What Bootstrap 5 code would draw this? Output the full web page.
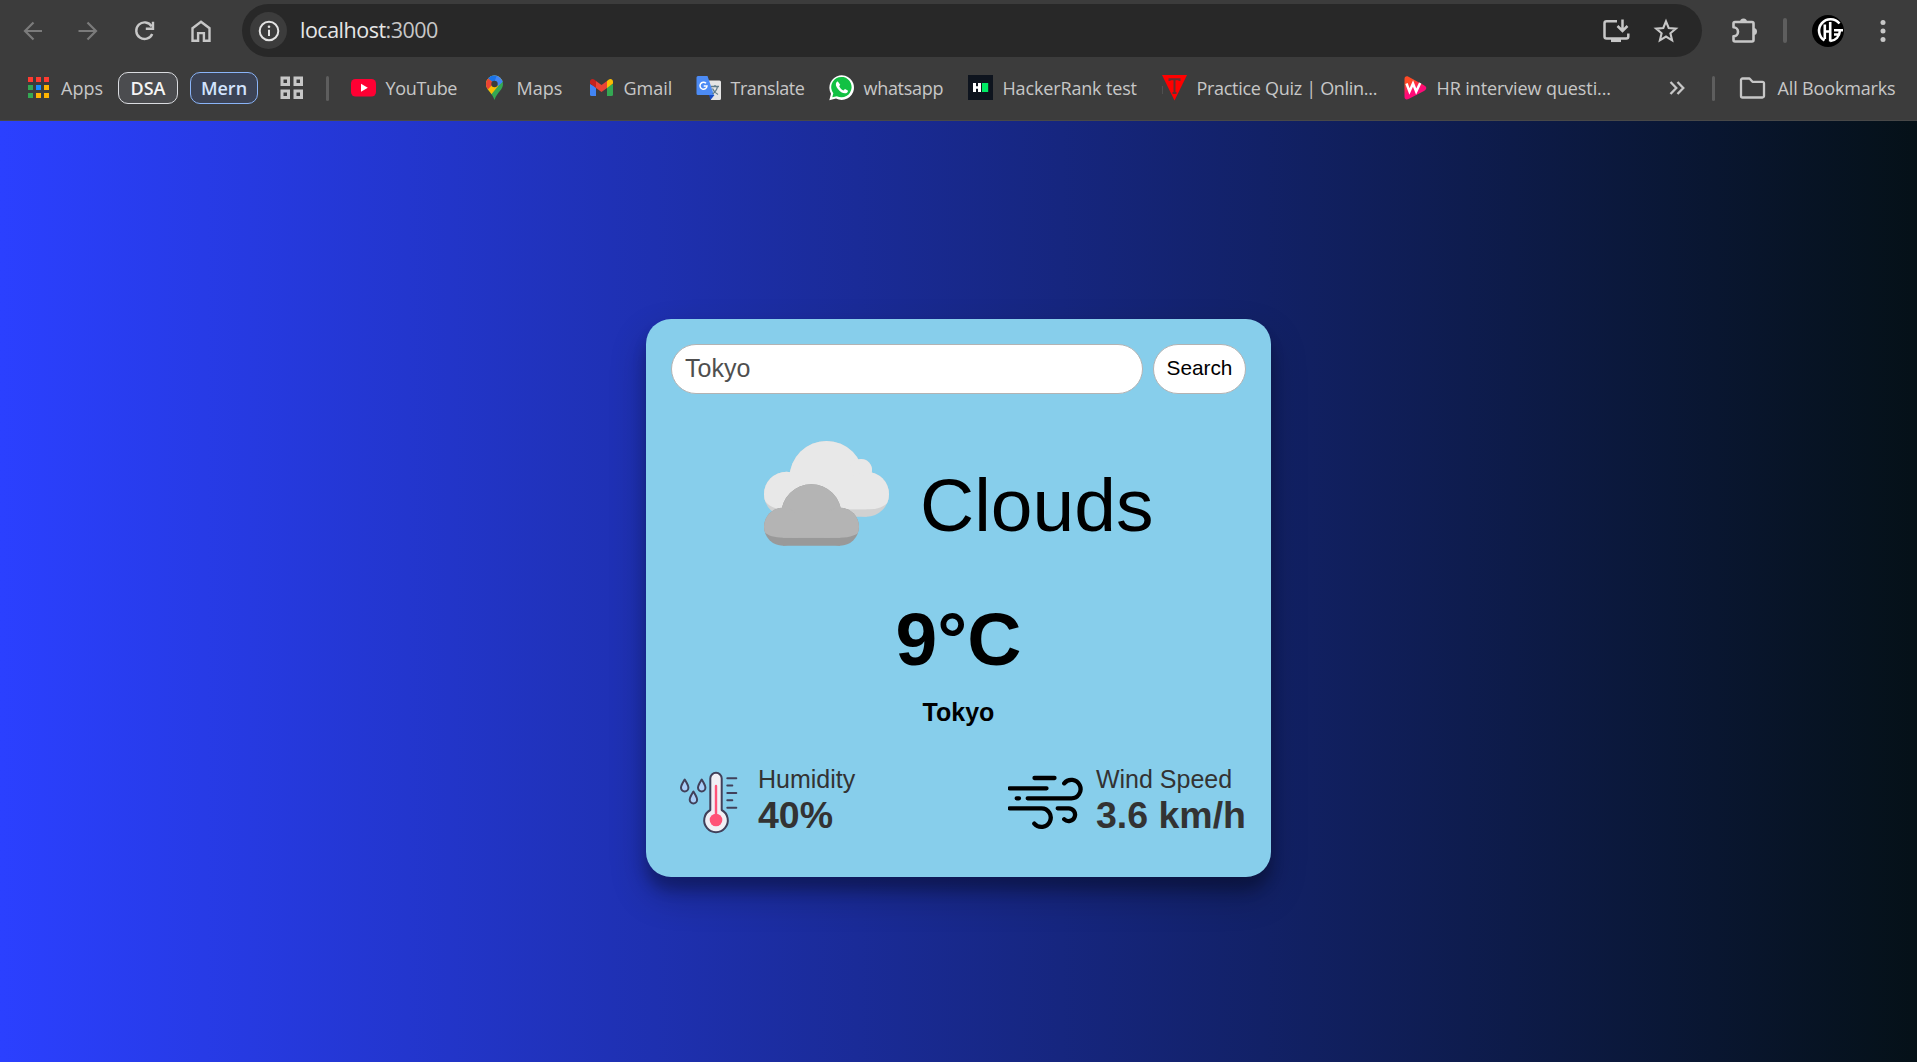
<!DOCTYPE html>
<html lang="en">
<head>
<meta charset="utf-8">
<meta name="viewport" content="width=device-width, initial-scale=1">
<title>Weather</title>
<link href="https://cdn.jsdelivr.net/npm/bootstrap@5.3.0/dist/css/bootstrap.min.css" rel="stylesheet">
<style>
body{height:100vh;overflow:hidden;font-family:"Liberation Sans",Arial,sans-serif;color:#000;background:#3c3c3c}
svg{display:block;flex:none}
/* browser chrome */
.chrome{height:121px;background:#3c3c3c;border-bottom:1px solid #484848;font-family:"Open Sans","Noto Sans",sans-serif;color:#c7c7c7}
.toolbar{height:61px}
.nav-icons{width:242px;padding-left:20px;gap:30px;flex:none}
.omnibox{width:1460px;height:53px;margin-top:4px;border-radius:27px;background:#282828;padding:0 22px 0 8px;flex:none}
.site-info{width:37px;height:37px;background:#3c3c3c}
.address{font-size:21.5px;line-height:30px;margin-left:13px;color:#e6e6e6;letter-spacing:-.5px;margin-top:-1px}
.address span{color:#c7c7c7}
.omni-actions{gap:22px}
.tool-end{padding-left:27px;height:61px}
.divider{width:3.5px;height:25px;border-radius:2px;background:#5e5e5e;flex:none}
.avatar{margin-left:25px}
.dots{margin-left:36px}
.bookmarks{height:54px;padding-left:26px;font-size:18px;line-height:26px}
.bookmarks .txt{white-space:nowrap;margin-top:-1px}
.pill{height:32px;border:1.5px solid #dadce0;border-radius:10px;background:#4b4c4f;color:#f5f5f5;font-weight:600;flex:none}
.pill-dsa{width:60px;margin-left:15px}
.pill-mern{width:68px;margin-left:12px}
.pill-mern{border-color:#8ab4f8;background:#3c4355;color:#d3e3fd}
.apps-icon{margin-right:9px}
.groups-icon{margin-left:21px;margin-right:20.5px}
.links{margin-left:21.5px}
.bm{flex:none}
.bm .ico{width:26px;margin-right:9px}
.w-yt{width:131px;letter-spacing:-.35px}
.w-maps{width:107px}
.w-gmail{width:107px}
.w-tr{width:133px;letter-spacing:-.45px}
.w-wa{width:139px;letter-spacing:-.3px}
.w-hack{width:194px;letter-spacing:-.15px}
.w-quiz{width:240px;letter-spacing:-.3px}
.w-hr{width:265px;letter-spacing:-.1px}
.after-more{margin-left:25px;margin-right:23.5px}
.all-bm{letter-spacing:-.15px;margin-left:11px}
/* page */
.page{height:941px;background:linear-gradient(to right,#2b40ff,#051118)}
.weather{width:625px;height:558px;margin-top:197.5px;padding:25px;border-radius:25px;background:#87ceeb;box-shadow:0 17.5px 35px rgba(0,0,0,.25),0 12.5px 12.5px rgba(0,0,0,.22)}
.city-input{width:471.5px;height:50px;border:1px solid #b3b3b3;border-radius:25px;padding:0 13px;font-size:25px;color:#4f4f4f;background:#fff}
.search-btn,.search-btn:hover{width:93px;height:50px;border:1px solid #b3b3b3;border-radius:25px;font-size:20.8px;line-height:1;color:#000;background:#fff;padding:0}
.sky{margin-top:47px;gap:31.5px}
.sky-name{font-size:75px;line-height:75px;margin-top:27.5px;height:77.5px}
.degrees{font-size:75px;line-height:75px;font-weight:700;margin-top:56.5px}
.place{font-size:25px;line-height:25px;font-weight:700;margin-top:22.5px}
.facts{margin-top:39px;color:#333}
.fact-label{font-size:25px;line-height:31px}
.fact-value{font-size:37.5px;line-height:40px;font-weight:700}
.gap-h{gap:12px}.gap-w{gap:12.5px}
</style>
<script src="https://cdn.jsdelivr.net/npm/bootstrap@5.3.0/dist/js/bootstrap.bundle.min.js"></script>
</head>
<body>
<header class="chrome">
  <div class="toolbar d-flex">
    <div class="nav-icons d-flex align-items-center">
      <svg width="26" height="26" viewBox="0 0 26 26" fill="none" stroke="#7b7b7b" stroke-width="2.200"><path d="M22 13H5M13.500 4.500 5 13l8.500 8.500"/></svg>
      <svg width="26" height="26" viewBox="0 0 26 26" fill="none" stroke="#7b7b7b" stroke-width="2.200"><path d="M2.500 13h17M11.500 4.500 20 13l-8.500 8.500"/></svg>
      <svg width="26" height="26" viewBox="0 0 26 26" fill="none" stroke="#c7c7c7" stroke-width="2.400"><path d="M19.600 8.300A8.300 8.300 0 1 0 20.200 16M21 3.800v7h-7.200"/></svg>
      <svg width="26" height="26" viewBox="0 0 26 26" fill="none" stroke="#c7c7c7" stroke-width="2.400"><path d="M4.500 10.200 13 3.800l8.500 6.400v12.500h-5.600v-7.600h-5.800v7.600H4.500z"/></svg>
    </div>
    <div class="omnibox d-flex align-items-center">
      <span class="site-info rounded-circle d-flex align-items-center justify-content-center">
        <svg width="22" height="22" viewBox="0 0 22 22"><circle cx="11" cy="11" r="9.300" fill="none" stroke="#e3e3e3" stroke-width="2"/><circle cx="11" cy="6.800" r="1.300" fill="#e3e3e3"/><path d="M11 9.700v6.200" stroke="#e3e3e3" stroke-width="2"/></svg>
      </span>
      <span class="address">localhost<span>:3000</span></span>
      <div class="omni-actions d-flex align-items-center ms-auto">
        <svg width="30" height="28" viewBox="0 0 30 28" fill="none" stroke="#c7c7c7" stroke-width="2.500"><path d="M17 4.200H6.500a2 2 0 0 0-2 2v13.300a2 2 0 0 0 2 2h19.800a2 2 0 0 0 2-2V16.500"/><path d="M22.500 2.500v11M17.500 9l5 5 5-5"/><path d="M11 23.300h10" stroke-width="3.500"/></svg>
        <svg width="28" height="28" viewBox="0 0 28 28" fill="none" stroke="#c7c7c7" stroke-width="2.100"><path d="M14 4.300l2.700 6.700 7.200.6-5.500 4.700 1.700 7L14 19.500l-6.100 3.800 1.700-7L4.100 11.600l7.200-.6z"/></svg>
      </div>
    </div>
    <div class="tool-end d-flex align-items-center flex-grow-1">
      <svg width="30" height="30" viewBox="0 0 30 30"><path d="M6 6h17a1.500 1.500 0 0 1 1.500 1.500v16.500a1.500 1.500 0 0 1-1.500 1.500H6A1.500 1.500 0 0 1 4.500 24v-3.700a4.400 4.400 0 0 0 0-9V7.500A1.500 1.500 0 0 1 6 6z" fill="none" stroke="#c7c7c7" stroke-width="2.600" stroke-linejoin="round"/><path d="M11 6a3.500 3.500 0 0 1 7 0zM24.500 12a3.500 3.500 0 0 1 0 7z" fill="#c7c7c7"/></svg>
      <span class="divider ms-4"></span>
      <svg class="avatar" width="32" height="32" viewBox="0 0 32 32" fill="none" stroke="#fff" stroke-width="2.600"><circle cx="16" cy="16" r="16" fill="#000" stroke="none"/><path d="M27.500 8.500A11.500 11.500 0 1 0 12.500 25.500"/><path d="M12.800 9.500v14.500M18.200 7v19.500M12.800 16.500h5.400M31 15.300h-9M28 15.500c-.5 6-4.500 10-9.800 10.500M22 19.500h6"/></svg>
      <svg class="dots" width="6" height="24" viewBox="0 0 6 24" fill="#c7c7c7"><circle cx="3" cy="3.500" r="2.500"/><circle cx="3" cy="12" r="2.500"/><circle cx="3" cy="20.500" r="2.500"/></svg>
    </div>
  </div>
  <nav class="bookmarks d-flex align-items-center">
    <svg class="apps-icon" width="26" height="24" viewBox="0 0 26 24"><g transform="translate(2 0)"><path d="M0 1h5v5H0zM8 1h5v5H8zM16 1h5v5h-5z" fill="#ff3b30"/><path d="M0 9h5v5H0zM0 17h5v5H0z" fill="#34a853"/><path d="M8 9h5v5H8z" fill="#1a8cff"/><path d="M16 9h5v5h-5zM8 17h5v5H8zM16 17h5v5h-5z" fill="#ffb300"/></g></svg>
    <span class="txt">Apps</span>
    <span class="pill pill-dsa d-flex align-items-center justify-content-center"><span class="txt">DSA</span></span>
    <span class="pill pill-mern d-flex align-items-center justify-content-center"><span class="txt">Mern</span></span>
    <svg class="groups-icon" width="26" height="26" viewBox="0 0 26 26" fill="none" stroke="#c7c7c7" stroke-width="3"><path d="M3 3h6.500v6.500H3zM16 3h6.500v6.500H16zM3 16h6.500v6.500H3zM16 16h6.500v6.500H16z"/></svg>
    <span class="divider"></span>
    <div class="links d-flex align-items-center">
      <div class="bm w-yt d-flex align-items-center"><span class="ico"><svg width="26" height="26" viewBox="0 0 26 26"><rect x="0" y="4" width="25" height="17.500" rx="4.500" fill="#ff0033"/><path d="M10 8.800v8l6.800-4z" fill="#fff"/></svg></span><span class="txt">YouTube</span></div>
      <div class="bm w-maps d-flex align-items-center"><span class="ico"><svg width="26" height="26" viewBox="0 0 26 26"><defs><clipPath id="pin"><path d="M12.500 0.500a8.500 8.500 0 0 1 8.500 8.500c0 6-5.500 7.500-8.500 16-3-8.500-8.500-10-8.500-16a8.500 8.500 0 0 1 8.500-8.500z"/></clipPath></defs><g clip-path="url(#pin)"><path d="M0 0h26v26H0z" fill="#34a853"/><path d="M0 0h26L21 5 8 21 0 18z" fill="#fbbc04"/><path d="M6 2 16 11 23 5V0H8z" fill="#4285f4"/><path d="M0 0l6 3 6 5-7.500 8L0 10z" fill="#ea4335"/><path d="M5.500 3 9 0h6l-3 8z" fill="#1a73e8"/></g><circle cx="12.500" cy="9" r="3.200" fill="#3c3c3c"/></svg></span><span class="txt">Maps</span></div>
      <div class="bm w-gmail d-flex align-items-center"><span class="ico"><svg width="26" height="26" viewBox="0 0 26 26"><path d="M1 9v10.500A1.500 1.500 0 0 0 2.500 21H7V12z" fill="#4285f4"/><path d="M24 9v10.500a1.500 1.500 0 0 1-1.500 1.500H18v-9z" fill="#34a853"/><path d="M18 6v7l6-4.500V6.500c0-2.600-2.800-3.300-4.500-1.800z" fill="#fbbc04"/><path d="M7 13V5.900l5.500 4.200L18 5.900V13l-5.500 4z" fill="#ea4335"/><path d="M1 6.500v2L7 13V5.900L5.500 4.700C3.800 3.200 1 3.900 1 6.500z" fill="#c5221f"/></svg></span><span class="txt">Gmail</span></div>
      <div class="bm w-tr d-flex align-items-center"><span class="ico"><svg width="26" height="26" viewBox="0 0 26 26"><path d="M11 5.500h12.500a1.500 1.500 0 0 1 1.500 1.500v16.500a1.500 1.500 0 0 1-1.500 1.500H15z" fill="#e4e4e4"/><path d="M13 20h5.500L14.500 25z" fill="#174bc4"/><path d="M2 1h9.500L18 20H2a1.500 1.500 0 0 1-1.500-1.500v-16A1.500 1.500 0 0 1 2 1z" fill="#4c8bf5"/><path d="M10 8.300A3.500 3.500 0 1 0 11 11H7.700" fill="none" stroke="#fff" stroke-width="1.500"/><path d="M15 11.500h8M19 10v1.500M21.500 11.500c-.5 3-3 6-5 7.500M16.500 13.500c1 2.500 3.500 5 5.500 6" fill="none" stroke="#607d8b" stroke-width="1.300"/></svg></span><span class="txt">Translate</span></div>
      <div class="bm w-wa d-flex align-items-center"><span class="ico"><svg width="26" height="26" viewBox="0 0 26 26"><path d="M.3 25.200 2 18.700A12.300 12.300 0 1 1 7 23.500z" fill="#fff"/><path d="M3.300 22.300 4.300 18.300A10.200 10.200 0 1 1 7.800 21.200z" fill="#12c143"/><path d="M9.200 6.900c-.5-.5-1.200-.3-1.700.3-3 3.700 4.900 12.300 9.500 11 1.600-.5 2.200-1.700 1.800-2.700l-2.800-1.500-1.600 1.500c-2-.9-3.300-2.300-4.200-4.200l1-1.600z" fill="#fff"/></svg></span><span class="txt">whatsapp</span></div>
      <div class="bm w-hack d-flex align-items-center"><span class="ico"><svg width="26" height="26" viewBox="0 0 26 26"><path d="M0 0h25v25H0z" fill="#0e141e"/><path d="M5 8h3v3.200h2V8h3v9h-3v-3.200H8V17H5z" fill="#fff"/><path d="M14 8h6.200v9H14z" fill="#00ea64"/></svg></span><span class="txt">HackerRank test</span></div>
      <div class="bm w-quiz d-flex align-items-center"><span class="ico"><svg width="26" height="26" viewBox="0 0 26 26"><path d="M0 0h25L12.500 25.500z" fill="#f00"/><path d="M7.500 6V4.300h10V6M12.500 4.300V18M10.500 18h4" fill="none" stroke="#623030" stroke-width="2"/><path d="M.3 11v8" stroke="#666" stroke-width=".6"/></svg></span><span class="txt">Practice Quiz | Onlin...</span></div>
      <div class="bm w-hr d-flex align-items-center"><span class="ico"><svg width="26" height="26" viewBox="0 0 26 26"><defs><linearGradient id="wg" x1="0" y1="0" x2=".4" y2="1"><stop offset=".3" stop-color="#ff4a26"/><stop offset=".7" stop-color="#ff0a78"/></linearGradient></defs><path d="M2.500 4c0-2.500 2-3.300 4-2.200l15.500 8.400c3 1.700 3 4 0 5.700L6.500 24c-2 1.100-4 .3-4-2.200z" fill="url(#wg)"/><path d="M4.500 8.500l3 8 3.500-8 3.200 8 4-8.500" fill="none" stroke="#fff" stroke-width="2.500"/></svg></span><span class="txt">HR interview questi...</span></div>
    </div>
    <svg width="20" height="18" viewBox="0 0 20 18" fill="none" stroke="#c7c7c7" stroke-width="2.300"><path d="M3.500 3 9.300 9l-5.800 6M10.500 3l5.800 6-5.800 6"/></svg>
    <span class="divider after-more"></span>
    <svg width="28" height="24" viewBox="0 0 28 24" fill="none" stroke="#c7c7c7" stroke-width="2.300" stroke-linejoin="round"><path d="M3.500 2.500h7l3 3.300h10a1.500 1.500 0 0 1 1.500 1.500v12.700a1.500 1.500 0 0 1-1.500 1.500h-20A1.500 1.500 0 0 1 2 20V4a1.500 1.500 0 0 1 1.500-1.500z"/></svg>
    <span class="txt all-bm">All Bookmarks</span>
  </nav>
</header>
<main class="page d-flex justify-content-center align-items-start">
  <section class="weather">
    <form class="d-flex justify-content-between">
      <input class="city-input" type="text" value="Tokyo" aria-label="City">
      <button class="btn search-btn" type="button">Search</button>
    </form>
    <div class="sky d-flex justify-content-center align-items-start">
      <svg width="125" height="105" viewBox="0 0 125 105">
        <defs>
          <g id="back"><circle cx="62.500" cy="37" r="37"/><circle cx="97" cy="29" r="11"/><circle cx="102.500" cy="53.200" r="22.500"/><circle cx="22.500" cy="53.200" r="22.500"/><path d="M22.500 35h80v40.700h-80z"/></g>
          <g id="front"><circle cx="47.300" cy="73.300" r="30"/><circle cx="19" cy="85.700" r="19"/><circle cx="76" cy="85.700" r="19"/><path d="M19 75h57v29.700H19z"/></g>
          <clipPath id="backTop"><path d="M-2-2h130v58c-4 8-13 12.300-23 12.300H20C10 68.300 2 64 -2 55z"/></clipPath>
          <clipPath id="frontTop"><path d="M-2 40h100v48c-4 6-12 8.700-22 8.700H19C9 96.700 1 94-2 88z"/></clipPath>
        </defs>
        <use href="#back" fill="#d1d1d1"/><use href="#back" fill="#e8e8e8" clip-path="url(#backTop)"/>
        <use href="#front" fill="#999"/><use href="#front" fill="#b4b4b4" clip-path="url(#frontTop)"/>
      </svg>
      <div class="sky-name">Clouds</div>
    </div>
    <div class="degrees text-center">9°C</div>
    <div class="place text-center">Tokyo</div>
    <div class="facts d-flex justify-content-between align-items-start">
      <div class="gap-h d-flex">
        <svg width="75" height="75" viewBox="0 0 75 75" fill="none" stroke="#41405a" stroke-width="2" stroke-linecap="round" stroke-linejoin="round">
          <g fill="#a9cef8"><path id="drop" d="M13.700 15.500c-1.500 2.500-3.700 5.500-3.700 8.300a3.700 3.700 0 0 0 7.400 0c0-2.800-2.200-5.800-3.700-8.300z"/><use href="#drop" x="17"/><use href="#drop" x="8.700" y="12"/></g>
          <path d="M39.300 46V14.500a5.700 5.700 0 0 1 11.400 0V46a11.800 11.800 0 1 1-11.400 0z" fill="#f1eff5"/>
          <path d="M45 22v34" stroke="#ff5277" stroke-width="2.400"/><circle cx="45" cy="56" r="6.300" fill="#ff5277" stroke="none"/>
          <path d="M56.300 14.300h9M56.300 21.500h5M56.300 29h9M56.300 36.300h5M56.300 43.700h9"/>
        </svg>
        <div><div class="fact-label">Humidity</div><div class="fact-value">40%</div></div>
      </div>
      <div class="gap-w d-flex">
        <svg width="75" height="75" viewBox="0 0 75 75" fill="none" stroke="#000" stroke-width="4.300" stroke-linecap="round">
          <path d="M26.500 14h20M1.700 24.300h36.800M8.700 34.300h2.300M19.700 34.300h43.500a9.200 9.200 0 1 0-7-15M1.700 44.300h31.800a9.300 9.300 0 1 1-7.200 15.300M49.700 44.300h10.800a6.400 6.400 0 1 1-4.300 11"/>
        </svg>
        <div><div class="fact-label">Wind Speed</div><div class="fact-value">3.6 km/h</div></div>
      </div>
    </div>
  </section>
</main>
</body>
</html>
